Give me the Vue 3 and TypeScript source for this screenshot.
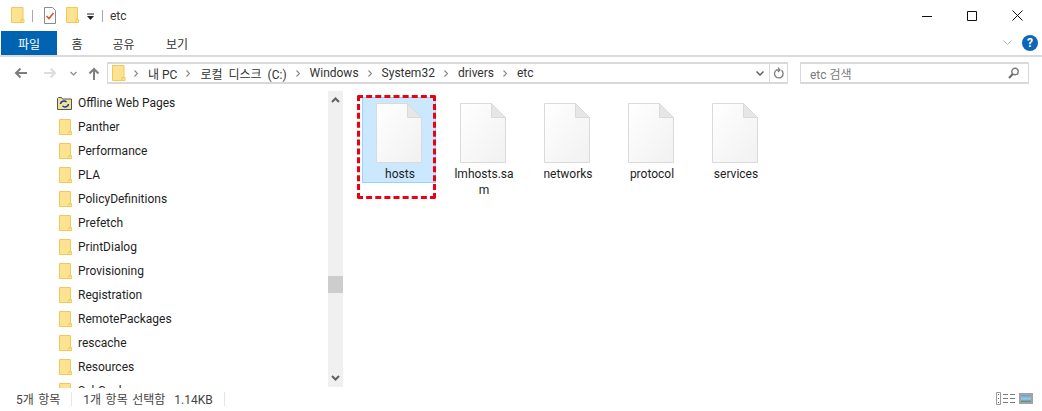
<script setup lang="ts">
const folders = ['Panther','Performance','PLA','PolicyDefinitions','Prefetch','PrintDialog','Provisioning','Registration','RemotePackages','rescache','Resources','SchCache']
const files = ['hosts','lmhosts.sam','networks','protocol','services']
const crumbs = ['내 PC','로컬 디스크 (C:)','Windows','System32','drivers','etc']
</script>

<template>
  <div class="win">
    <header class="title">
      <svg class="fold" width="14" height="17" viewBox="0 0 14 17"><path d="M.5.5h11.500v15H.5z" fill="#fde38f" stroke="#eeca5c"/><path d="M10 15.500v-3h3v3z" fill="#fde38f" stroke="#eeca5c"/></svg>
      <i class="sep"></i>
      <svg class="qa" width="12" height="17" viewBox="0 0 12 17"><path d="M.5.500h8l3 3v13H.5z" fill="#fbfbfb" stroke="#8b8b8b"/><path d="M2.500 9l2.500 2.500L9.500 6" fill="none" stroke="#d8572a" stroke-width="1.600"/></svg>
      <svg class="fold2" width="13" height="17" viewBox="0 0 13 17"><path d="M.5.500h11v15H.5z" fill="#fde38f" stroke="#eeca5c"/><path d="M10 15.500v-3h2.500v3z" fill="#fde38f" stroke="#eeca5c"/></svg>
      <svg class="drop" width="7" height="8" viewBox="0 0 7 8"><path d="M0 1h7" stroke="#222"/><path d="M0 3h7L3.500 7z" fill="#222"/></svg>
      <i class="sep sep2"></i>
      <span class="ttext">etc</span>
      <div class="caps">
        <svg width="10" height="10" viewBox="0 0 10 10"><path d="M0 5.500h10" stroke="#111"/></svg>
        <svg width="10" height="10" viewBox="0 0 10 10"><path d="M.5.500h9v9h-9z" fill="none" stroke="#111"/></svg>
        <svg width="11" height="11" viewBox="0 0 11 11"><path d="M.5.500l10 10M10.500.500l-10 10" stroke="#111"/></svg>
      </div>
    </header>

    <nav class="ribbon">
      <span class="tab active">파일</span>
      <span class="tab">홈</span>
      <span class="tab">공유</span>
      <span class="tab">보기</span>
      <div class="ribbon-right">
        <svg width="9" height="6" viewBox="0 0 9 6"><path d="M.5.500L4.500 4.500 8.500.500" fill="none" stroke="#b5b5b5"/></svg>
        <span class="help">?</span>
      </div>
    </nav>

    <div class="toolbar">
      <svg class="navi" width="13" height="12" viewBox="0 0 13 12"><path d="M13 6H2M6.500 1.500L2 6l4.500 4.500" fill="none" stroke="#7e7e7e" stroke-width="2"/></svg>
      <svg class="navi fwd" width="13" height="12" viewBox="0 0 13 12"><path d="M0 6h11M6.500 1.500L11 6l-4.500 4.500" fill="none" stroke="#dcdcdc" stroke-width="2"/></svg>
      <svg class="navi chev" width="7" height="5" viewBox="0 0 7 5"><path d="M.5 1L3.500 4 6.500 1" fill="none" stroke="#8a8a8a" stroke-width="1.200"/></svg>
      <svg class="navi up" width="12" height="13" viewBox="0 0 12 13"><path d="M6 13V2M1.500 6.500L6 2l4.500 4.500" fill="none" stroke="#7e7e7e" stroke-width="2"/></svg>
      <div class="address">
        <svg class="addr-fold" width="14" height="17" viewBox="0 0 14 17"><path d="M.5.500h11.500v15H.5z" fill="#fde38f" stroke="#eeca5c"/><path d="M10 15.500v-3h3v3z" fill="#fde38f" stroke="#eeca5c"/></svg>
        <template v-for="c in crumbs" :key="c">
          <svg class="crumb-arrow" width="4" height="7" viewBox="0 0 4 7"><path d="M.5.500l3 3-3 3" fill="none" stroke="#8a8a8a" stroke-width="1.200"/></svg>
          <span class="crumb" :class="{ wide: c.includes('디스크') }">{{ c }}</span>
        </template>
        <svg class="addr-drop" width="8" height="5" viewBox="0 0 8 5"><path d="M.5.500L4 4 7.500.500" fill="none" stroke="#5f5f5f" stroke-width="1.500"/></svg>
        <span class="refresh">
          <svg width="11" height="12" viewBox="0 0 11 12"><path d="M8.500 3.300A4.300 4.300 0 1 1 3.500 3H6" fill="none" stroke="#7a7a7a" stroke-width="1.300"/><path d="M5 .500L7 3 5 5" fill="none" stroke="#7a7a7a" stroke-width="1.200"/></svg>
        </span>
      </div>
      <div class="search">
        <span>etc 검색</span>
        <svg width="11" height="12" viewBox="0 0 11 12"><circle cx="7" cy="4.500" r="3.200" fill="none" stroke="#7a7a7a" stroke-width="1.400"/><path d="M4.800 7L1 11" stroke="#6a6a6a" stroke-width="2"/></svg>
      </div>
    </div>

    <main class="main">
      <aside class="side">
        <div class="row">
          <svg class="offline" width="15" height="13" viewBox="0 0 15 13"><path d="M.5 1.500l1-1h3l1 1.500h9v10.500H.5z" fill="#f0e394" stroke="#555"/><path d="M3.500 7a3.500 3 0 0 1 6-2M11.500 7a3.500 3 0 0 1-6 2" fill="none" stroke="#1b37b4" stroke-width="1.600"/></svg>
          <span>Offline Web Pages</span>
        </div>
        <div v-for="f in folders" :key="f" class="row">
          <svg width="13" height="17" viewBox="0 0 13 17"><path d="M.5.500h11v15H.5z" fill="#fde38f" stroke="#eeca5c"/><path d="M10 15.500v-3h2.500v3z" fill="#fde38f" stroke="#eeca5c"/></svg>
          <span>{{ f }}</span>
        </div>
      </aside>
      <div class="scroll">
        <svg width="9" height="6" viewBox="0 0 9 6"><path d="M1 5l3.500-3.500L8 5" fill="none" stroke="#606060" stroke-width="2"/></svg>
        <div class="thumb"></div>
        <svg width="9" height="6" viewBox="0 0 9 6"><path d="M1 1l3.500 3.500L8 1" fill="none" stroke="#606060" stroke-width="2"/></svg>
      </div>
      <section class="files">
        <div v-for="(f, i) in files" :key="f" class="tile" :class="{ sel: i === 0 }">
          <svg width="46" height="60" viewBox="0 0 46 60">
            <defs><linearGradient id="pg" x1="0" y1="0" x2="1" y2="1"><stop offset="0" stop-color="#ffffff"/><stop offset="1" stop-color="#f1f1f1"/></linearGradient></defs>
            <path d="M.5.500h31l14 14v45H.5z" fill="url(#pg)" stroke="#dadada"/>
            <path d="M31.500.500v14h14z" fill="#e6e6e6" stroke="#dadada"/>
          </svg>
          <span class="name">{{ f }}</span>
        </div>
        <div class="marker"></div>
      </section>
    </main>

    <footer class="status">
      <span class="st1">5개 항목</span>
      <i class="st-sep"></i>
      <span class="st2">1개 항목 선택함&nbsp; 1.14KB</span>
      <i class="st-sep"></i>
      <div class="views">
        <svg width="20" height="13" viewBox="0 0 20 13"><path d="M.5.500h4v12h-4z" fill="#fff" stroke="#9a9a9a"/><path d="M2 2.500h1M2 6.500h1" stroke="#666"/><path d="M2 10.500h1" stroke="#c03a2b"/><path d="M7 2.500h5M14 2.500h5M7 6.500h5M14 6.500h5M7 10.500h5M14 10.500h5" stroke="#7a7a7a"/></svg>
        <svg width="14" height="11" viewBox="0 0 14 11"><defs><linearGradient id="ph" x1="0" y1="0" x2="0" y2="1"><stop offset="0" stop-color="#4b95d9"/><stop offset=".55" stop-color="#9fcbe0"/><stop offset="1" stop-color="#3f6f58"/></linearGradient></defs><path d="M1 1h12v9H1z" fill="url(#ph)" stroke="#a3a3a3" stroke-width="2"/></svg>
      </div>
    </footer>
  </div>
</template>

<style>
html, body { margin: 0; background: #fff; }
</style>

<style scoped>
.win {
  width: 1042px;
  height: 411px;
  display: flex;
  flex-direction: column;
  overflow: hidden;
  background: #fff;
  font: 12px Roboto, "Noto Sans CJK KR", sans-serif;
  color: #1e1e1e;
}
.title { height: 31px; display: flex; align-items: center; padding-left: 11px; box-sizing: border-box; }
.sep { width: 1px; height: 12px; background: #a8a8a8; margin: 0 11px 0 7px; }
.sep2 { margin: 0 7px 0 8px; }
.fold2 { margin-left: 10px; }
.drop { margin-left: 8px; margin-top: 2px; }
.ttext { color: #333; }
.caps { margin-left: auto; display: flex; align-items: center; gap: 35px; padding-right: 19px; }
.ribbon { height: 24px; display: flex; align-items: stretch; border-bottom: 2px solid #dadada; padding-left: 1px; }
.tab { display: flex; align-items: center; justify-content: center; color: #333; width: 48px; }
.tab.active { background: #0063b1; color: #fff; width: 56px; margin-right: 1px; }
.tab:nth-child(2) { width: 38px; }
.tab:nth-child(3) { width: 55px; }
.tab:nth-child(4) { width: 52px; }
.ribbon-right { margin-left: auto; display: flex; align-items: center; gap: 10px; padding-right: 4px; }
.help { width: 16px; height: 16px; border-radius: 50%; background: #0f66b8; color: #fff; font-weight: 700; font-size: 12px; line-height: 16px; text-align: center; }
.toolbar { height: 32px; display: flex; align-items: center; box-sizing: border-box; padding: 0 12px 0 0; }
.navi { flex: none; }
.navi:first-child { margin-left: 14px; }
.fwd { margin-left: 17px; }
.chev { margin-left: 13px; }
.up { margin-left: 11px; }
.address { margin-left: 7px; width: 681px; height: 22px; border: 1px solid #d9d9d9; border-width: 2px 1px 2px 1px; box-sizing: border-box; display: flex; align-items: center; padding-left: 4px; }
.addr-fold { margin-right: 8px; }
.crumb-arrow { margin-right: 10px; flex: none; }
.crumb { margin-right: 9px; color: #333; white-space: nowrap; }
.crumb.wide { word-spacing: 3px; }
.addr-drop { margin-left: auto; margin-right: 5px; }
.refresh { width: 17px; height: 100%; border-left: 1px solid #d9d9d9; display: flex; align-items: center; justify-content: center; }
.search { margin-left: 12px; width: 229px; height: 22px; border: 1px solid #d9d9d9; border-width: 2px 1px 2px 1px; box-sizing: border-box; display: flex; align-items: center; justify-content: space-between; padding: 0 9px; color: #7a7a7a; }
.main { flex: 1; display: flex; min-height: 0; }
.side { width: 328px; flex: none; overflow: hidden; padding-top: 2px; }
.row { height: 24px; display: flex; align-items: center; padding-left: 59px; gap: 6px; }
.row svg { flex: none; }
.offline { margin-left: -2px; }
.scroll { width: 15px; flex: none; background: #f0f0f0; position: relative; display: flex; flex-direction: column; align-items: center; justify-content: space-between; padding: 6px 0; box-sizing: border-box; margin: 2px 0 1px; }
.thumb { position: absolute; left: 0; right: 0; top: 185px; height: 17px; background: #cdcdcd; }
.files { flex: 1; position: relative; display: flex; align-items: flex-start; gap: 10px; padding: 8px 0 0 19px; }
.tile { width: 74px; height: 86px; box-sizing: border-box; display: flex; flex-direction: column; align-items: center; padding-top: 5px; border: 1px solid transparent; }
.tile svg { flex: none; }
.tile.sel { background: #cce8ff; border-color: #99d1ff; }
.name { width: 60px; flex: none; text-align: center; line-height: 16px; margin: 3px 0 0 2px; overflow-wrap: anywhere; color: #1e1e1e; }
.marker { position: absolute; left: 14px; top: 6px; width: 79px; height: 104px; box-sizing: border-box; border: 3px dashed #ee0011; border-radius: 2px; }
.status { height: 23px; display: flex; align-items: center; color: #444; padding: 0 0 2px 16px; box-sizing: border-box; }
.status span { word-spacing: 1.500px; }
.st-sep { width: 1px; height: 14px; background: #e6e6e6; margin: 0 11px; }
.views { margin-left: auto; display: flex; gap: 3px; align-items: center; padding-right: 9px; }
</style>
